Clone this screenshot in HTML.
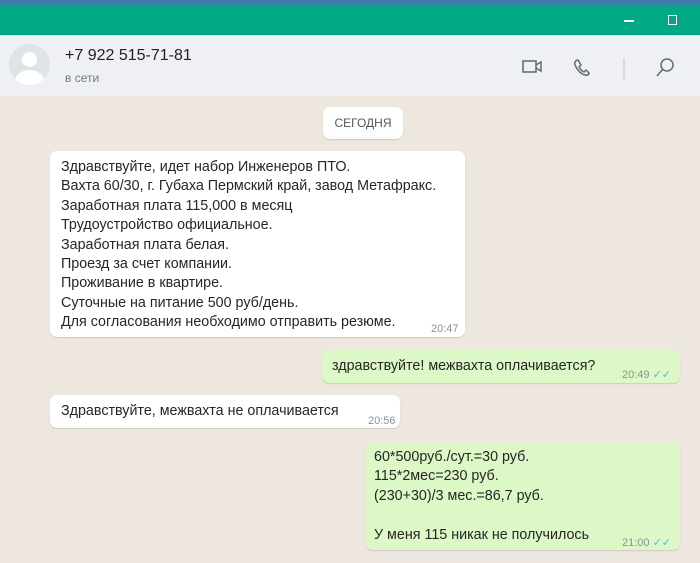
<!DOCTYPE html>
<html><head><meta charset="utf-8"><style>
*{margin:0;padding:0;box-sizing:border-box}
body{width:700px;height:563px;overflow:hidden;background:#ede7df;font-family:"Liberation Sans","DejaVu Sans",sans-serif;position:relative;color:#262626}
.top{position:absolute;left:0;top:0;width:700px;height:5px;background:#3d7fa8}
.green{position:absolute;left:0;top:5px;width:700px;height:30px;background:#00a884}
.hdr{position:absolute;left:0;top:35px;width:700px;height:61px;background:#eff0f3;border-top:1px solid #d9e6e2}
.av{position:absolute;left:9px;top:8px;width:41px;height:41px;border-radius:50%;background:#dfe5e7;overflow:hidden}
.b{position:absolute;background:#fff;border-radius:7px;box-shadow:0 1px 1px rgba(0,0,0,.13);font-size:14.3px;line-height:19.4px}
.o{background:#dcf8c6}
.t{position:absolute;font-size:11px;color:#8a9296}
.chk{color:#4fb6ec;font-size:11px}
</style></head><body>
<div class="top"></div>
<div class="green">
<div style="position:absolute;left:624px;top:15px;width:10px;height:1.5px;background:#fff"></div>
<div style="position:absolute;left:668px;top:10px;width:9px;height:10px;border:1.5px solid #fff"></div>
</div>
<div class="hdr">
<div class="av"><div style="position:absolute;left:13px;top:8px;width:15px;height:15px;border-radius:50%;background:#fff"></div><div style="position:absolute;left:6px;top:26px;width:29px;height:22px;border-radius:50% 50% 0 0;background:#fff"></div></div>
<div style="position:absolute;left:65px;top:11px;font-size:16px;color:#222">+7 922 515-71-81</div>
<div style="position:absolute;left:65px;top:35px;font-size:12px;color:#737b80">в сети</div>
<svg style="position:absolute;left:520px;top:20px" width="170" height="24" viewBox="0 0 170 24" fill="none" stroke="#5f6b70" stroke-width="1.5">
<rect x="3" y="5" width="13" height="11"/><path d="M16 9l5-3v9l-5-3"/>
<path d="M58 4c-2 0-4 2-3 5 2 5 6 9 10 10 3 1 4-1 4-2l-3-3-2 2c-2-1-4-3-5-5l2-2z"/>
<path d="M104 2v22" stroke="#cfd4d6"/>
<circle cx="147" cy="9" r="6"/><path d="M143 13l-6 7"/>
</svg>
</div>
<div class="b" style="left:323px;top:107px;width:80px;height:32px;font-size:12px;color:#555;text-align:center;line-height:32px">СЕГОДНЯ</div>
<div class="b" style="left:50px;top:151px;width:415px;height:186px;padding:7px 11px">Здравствуйте, идет набор Инженеров ПТО.<br>Вахта 60/30, г. Губаха Пермский край, завод Метафракс.<br>Заработная плата 115,000 в месяц<br>Трудоустройство официальное.<br>Заработная плата белая.<br>Проезд за счет компании.<br>Проживание в квартире.<br>Суточные на питание 500 руб/день.<br>Для согласования необходимо отправить резюме.<span class="t" style="left:381px;top:169px">20:47</span></div>
<div class="b o" style="left:322px;top:350px;width:358px;height:33px;padding:7px 10px">здравствуйте! межвахта оплачивается?<span class="t" style="left:300px;top:16px">20:49 <span class="chk">✓✓</span></span></div>
<div class="b" style="left:50px;top:395px;width:350px;height:33px;padding:7px 11px">Здравствуйте, межвахта не оплачивается<span class="t" style="left:318px;top:17px">20:56</span></div>
<div class="b o" style="left:366px;top:441px;width:314px;height:109px;padding:7px 8px">60*500руб./сут.=30 руб.<br>115*2мес=230 руб.<br>(230+30)/3 мес.=86,7 руб.<br><br>У меня 115 никак не получилось<span class="t" style="left:256px;top:93px">21:00 <span class="chk">✓✓</span></span></div>
</body></html>
